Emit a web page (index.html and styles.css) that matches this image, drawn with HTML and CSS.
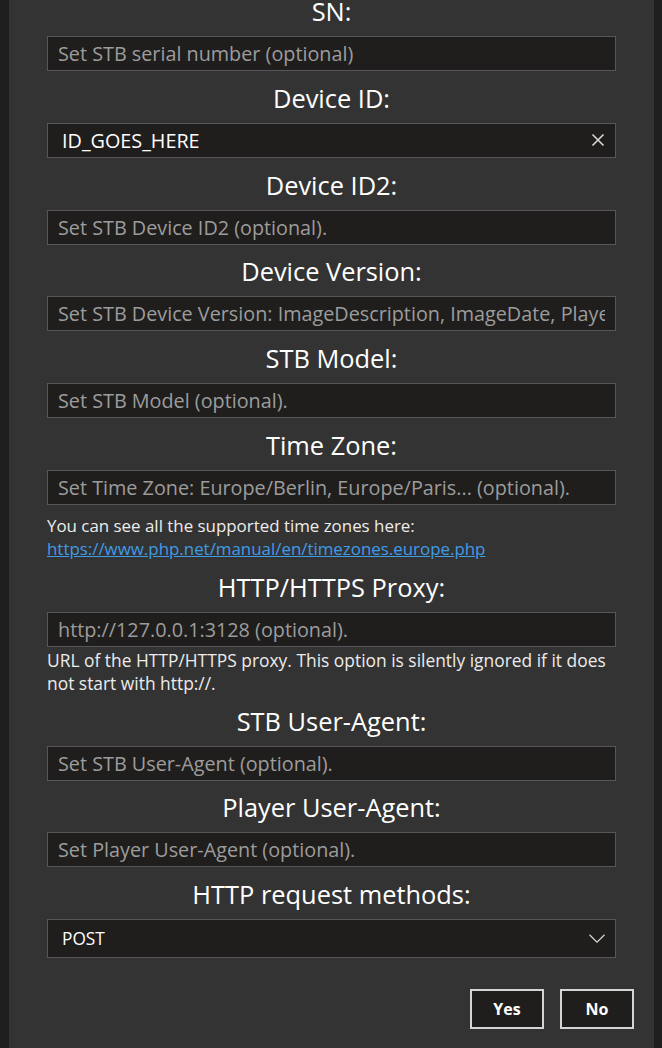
FILE: index.html
```html
<!DOCTYPE html>
<html lang="en">
<head>
<meta charset="utf-8">
<title>STB settings</title>
<link rel="stylesheet" href="styles.css">
</head>
<body>
<div class="dialog">
  <div class="field">
    <div class="label">SN:</div>
    <input class="box" type="text" placeholder="Set STB serial number (optional)">
  </div>
  <div class="field">
    <div class="label">Device ID:</div>
    <div class="box filled">
      <span class="value">ID_GOES_HERE</span>
      <svg class="clear" width="14" height="14" viewBox="0 0 14 14"><path d="M1.5 1.5 L12.5 12.5 M12.5 1.5 L1.5 12.5" stroke="#d6d6d6" stroke-width="1.6" fill="none"/></svg>
    </div>
  </div>
  <div class="field">
    <div class="label">Device ID2:</div>
    <input class="box" type="text" placeholder="Set STB Device ID2 (optional).">
  </div>
  <div class="field">
    <div class="label">Device Version:</div>
    <input class="box" type="text" placeholder="Set STB Device Version: ImageDescription, ImageDate, PlayerVersion (optional).">
  </div>
  <div class="field">
    <div class="label">STB Model:</div>
    <input class="box" type="text" placeholder="Set STB Model (optional).">
  </div>
  <div class="field">
    <div class="label">Time Zone:</div>
    <input class="box" type="text" placeholder="Set Time Zone: Europe/Berlin, Europe/Paris... (optional).">
    <p class="help tz">You can see all the supported time zones here:<br><a href="#">https://www.php.net/manual/en/timezones.europe.php</a></p>
  </div>
  <div class="field">
    <div class="label">HTTP/HTTPS Proxy:</div>
    <input class="box" type="text" placeholder="http://127.0.0.1:3128 (optional).">
    <p class="help proxy">URL of the HTTP/HTTPS proxy. This option is silently ignored if it does not start with http://.</p>
  </div>
  <div class="field">
    <div class="label">STB User-Agent:</div>
    <input class="box" type="text" placeholder="Set STB User-Agent (optional).">
  </div>
  <div class="field">
    <div class="label">Player User-Agent:</div>
    <input class="box" type="text" placeholder="Set Player User-Agent (optional).">
  </div>
  <div class="field">
    <div class="label">HTTP request methods:</div>
    <div class="box select">
      <span class="value">POST</span>
      <svg class="chev" width="16" height="9" viewBox="0 0 16 9"><path d="M0.5 0.8 L8 8.2 L15.5 0.8" stroke="#d6d6d6" stroke-width="1.2" fill="none"/></svg>
    </div>
  </div>
  <div class="actions">
    <button class="btn">Yes</button>
    <button class="btn">No</button>
  </div>
</div>
</body>
</html>
```
FILE: styles.css
```css
html, body {
  margin: 0;
  padding: 0;
  background: #1f1f1f;
  height: 100%;
  overflow: hidden;
}
body {
  font-family: "Open Sans", "Noto Sans", sans-serif;
  color: #ffffff;
}
.dialog {
  margin-left: 9px;
  width: 645px;
  height: 1048px;
  box-sizing: border-box;
  background: #333333;
  padding: 1px 38px 0;
}
.field {
  display: flex;
  flex-direction: column;
  margin-bottom: 16.8px;
}
.label {
  font-size: 25.4px;
  line-height: 20px;
  height: 20px;
  text-align: center;
  margin-bottom: 15px;
  color: #ffffff;
}
.box {
  display: flex;
  align-items: center;
  box-sizing: border-box;
  width: 100%;
  height: 35px;
  margin: 0;
  padding: 0 10px;
  background: #1f1e1d;
  border: 1px solid #55555a;
  border-radius: 0;
  color: #ffffff;
  font-family: "Open Sans", "Noto Sans", sans-serif;
  font-size: 19.8px;
  outline: none;
}
.box::placeholder {
  color: #9c9c9c;
  opacity: 1;
}
.filled {
  justify-content: space-between;
  padding-left: 14px;
}
.select {
  height: 39px;
  justify-content: space-between;
  padding-left: 14px;
  font-size: 17.3px;
}
.help {
  margin: 0;
  font-size: 17.4px;
  line-height: 23px;
  color: #ececec;
}
.help.tz {
  font-size: 16.9px;
  margin-top: 9px;
  margin-bottom: 0;
}
.help.proxy {
  margin-top: 2px;
  margin-bottom: -1px;
}
.help a {
  color: #3f9ce6;
  text-decoration: underline;
}
.actions {
  display: flex;
  justify-content: flex-end;
  gap: 16px;
  padding-top: 14px;
  margin-right: -18px;
}
.btn {
  width: 74px;
  height: 40px;
  background: #1f1e1d;
  border: 2px solid #d4d4d4;
  color: #ffffff;
  font-family: "Open Sans", "Noto Sans", sans-serif;
  font-weight: 700;
  font-size: 16px;
  padding: 0;
}
```
